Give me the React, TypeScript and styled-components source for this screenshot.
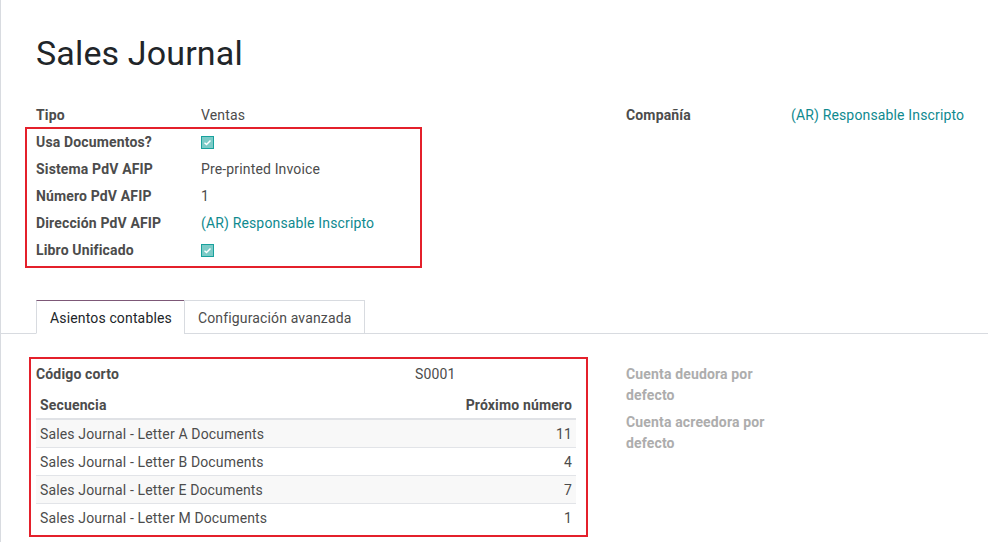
import React from "react";
import styled, { createGlobalStyle } from "styled-components";

const Global = createGlobalStyle`
  html, body { margin: 0; padding: 0; background: #fff; }
  body { font-family: Roboto, "Noto Sans", sans-serif; font-size: 14px; color: #4c4c4c; letter-spacing: 0.15px; }
  * { box-sizing: border-box; }
`;

const Sheet = styled.div`
  min-height: 542px;
  border-left: 1px solid #d8dbe0;
  background: #fff;
`;

const Header = styled.div`
  padding: 30px 36px 0 35px;
`;

const Title = styled.h1`
  margin: 0;
  font-size: 34px;
  font-weight: 400;
  line-height: 46px;
  letter-spacing: 0.15px;
  color: #212529;
`;

const Columns = styled.div`
  display: grid;
  grid-template-columns: 540px 1fr;
  column-gap: 50px;
  padding: 0 0 0 35px;
`;

const TopColumns = styled(Columns)`
  margin-top: 26px;
`;

const Group = styled.div`
  display: flex;
  flex-direction: column;
`;

const Row = styled.div<{ $labelWidth?: number }>`
  display: grid;
  grid-template-columns: ${(p) => p.$labelWidth ?? 165}px 1fr;
  align-items: center;
  height: 27px;
  line-height: 21px;
`;

const Label = styled.div<{ $muted?: boolean }>`
  font-weight: 700;
  color: ${(p) => (p.$muted ? "#adadad" : "#4c4c4c")};
`;

const Value = styled.div`
  color: #4c4c4c;
`;

const Link = styled.span`
  color: #0f8a8f;
`;

const Highlight = styled.div<{ $width: number }>`
  border: 2px solid #e4202b;
  width: ${(p) => p.$width}px;
`;

const TopHighlight = styled(Highlight)`
  margin: -2px 0 0 -11px;
  padding: 0 0 2px 9px;
`;

const Check = styled.span`
  display: inline-flex;
  align-items: center;
  justify-content: center;
  width: 13px;
  height: 13px;
  margin-top: 1px;
  background: #7ccbc7;
  border: 1px solid #19a19d;
`;

const CheckBox = () => (
  <Check>
    <svg width="9" height="9" viewBox="0 0 9 9">
      <path d="M1.5 4.8 L3.5 6.6 L7.5 2.4" fill="none" stroke="#fff" strokeWidth="1.4" />
    </svg>
  </Check>
);

const TabStrip = styled.div`
  display: flex;
  margin-top: 32px;
  padding-left: 35px;
  border-bottom: 1px solid #d8dbe0;
  height: 34px;
`;

const Tab = styled.div<{ $active?: boolean }>`
  display: flex;
  align-items: center;
  height: 34px;
  padding: 2px 12px 0 13px;
  border: 1px solid #d8dbe0;
  border-top-color: ${(p) => (p.$active ? "#7d5877" : "#d8dbe0")};
  border-bottom-color: ${(p) => (p.$active ? "#fff" : "#d8dbe0")};
  margin-left: ${(p) => (p.$active ? 0 : -1)}px;
  color: ${(p) => (p.$active ? "#212529" : "#4c4c4c")};
  background: #fff;
  line-height: 20px;
  white-space: nowrap;
`;

const NoteColumns = styled(Columns)`
  margin-top: 23px;
`;

const NoteHighlight = styled(Highlight)`
  margin-left: -7px;
  padding: 2px 10px 3px 5px;
`;

const CodeRow = styled(Row)`
  height: 30px;
  padding-bottom: 4px;
`;

const Table = styled.div`
  width: 540px;
`;

const HeadRow = styled.div`
  display: flex;
  justify-content: space-between;
  align-items: center;
  height: 29px;
  padding: 1px 4px 0;
  font-weight: 700;
  border-bottom: 2px solid #e0e2e6;
`;

const BodyRow = styled.div<{ $striped?: boolean }>`
  display: flex;
  justify-content: space-between;
  align-items: center;
  height: 28px;
  padding: 0 4px;
  background: ${(p) => (p.$striped ? "#f8f8f8" : "#fff")};
  border-bottom: 1px solid #e2e4e8;
  &:last-child { border-bottom: none; }
`;

const SideLabels = styled.div`
  display: flex;
  flex-direction: column;
  gap: 6px;
  padding-top: 7px;
  width: 160px;
`;

const SideLabel = styled(Label)`
  line-height: 21px;
`;

const rows = [
  ["Sales Journal - Letter A Documents", "11"],
  ["Sales Journal - Letter B Documents", "4"],
  ["Sales Journal - Letter E Documents", "7"],
  ["Sales Journal - Letter M Documents", "1"],
];

export default function App() {
  return (
    <>
      <Global />
      <Sheet>
        <Header>
          <Title>Sales Journal</Title>
        </Header>
        <TopColumns>
          <Group>
            <Row>
              <Label>Tipo</Label>
              <Value>Ventas</Value>
            </Row>
            <TopHighlight $width={397}>
              <Row>
                <Label>Usa Documentos?</Label>
                <Value>
                  <CheckBox />
                </Value>
              </Row>
              <Row>
                <Label>Sistema PdV AFIP</Label>
                <Value>Pre-printed Invoice</Value>
              </Row>
              <Row>
                <Label>Número PdV AFIP</Label>
                <Value>1</Value>
              </Row>
              <Row>
                <Label>Dirección PdV AFIP</Label>
                <Value>
                  <Link>(AR) Responsable Inscripto</Link>
                </Value>
              </Row>
              <Row>
                <Label>Libro Unificado</Label>
                <Value>
                  <CheckBox />
                </Value>
              </Row>
            </TopHighlight>
          </Group>
          <Group>
            <Row>
              <Label>Compañía</Label>
              <Value>
                <Link>(AR) Responsable Inscripto</Link>
              </Value>
            </Row>
          </Group>
        </TopColumns>
        <TabStrip>
          <Tab $active>Asientos contables</Tab>
          <Tab>Configuración avanzada</Tab>
        </TabStrip>
        <NoteColumns>
          <NoteHighlight $width={559}>
            <CodeRow $labelWidth={379}>
              <Label>Código corto</Label>
              <Value>S0001</Value>
            </CodeRow>
            <Table>
              <HeadRow>
                <span>Secuencia</span>
                <span>Próximo número</span>
              </HeadRow>
              <div>
                {rows.map(([name, num], i) => (
                  <BodyRow key={name} $striped={i % 2 === 0}>
                    <span>{name}</span>
                    <span>{num}</span>
                  </BodyRow>
                ))}
              </div>
            </Table>
          </NoteHighlight>
          <SideLabels>
            <SideLabel $muted>Cuenta deudora por defecto</SideLabel>
            <SideLabel $muted>Cuenta acreedora por defecto</SideLabel>
          </SideLabels>
        </NoteColumns>
      </Sheet>
    </>
  );
}
